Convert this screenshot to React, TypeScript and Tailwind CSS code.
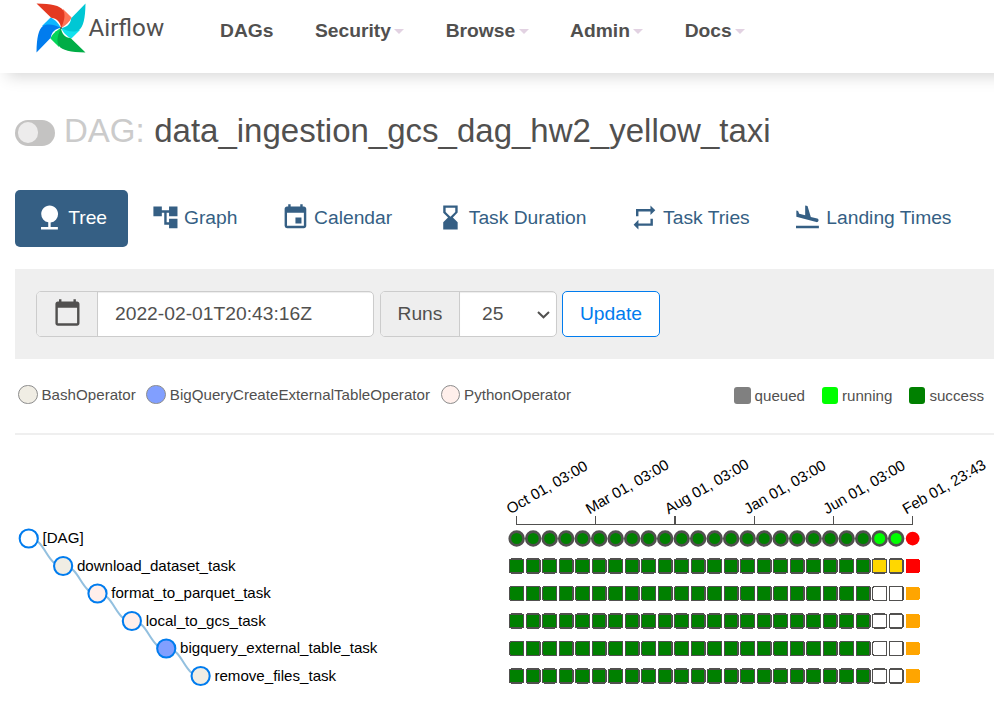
import type { ReactNode } from 'react';
import {
  MdAccountTree,
  MdCalendarToday,
  MdEvent,
  MdFlightLand,
  MdHourglassBottom,
  MdNature,
  MdRepeat,
} from 'react-icons/md';

const BLADES = [
  { angle: 0, dark: '#E43921', light: '#FF7557' },
  { angle: 90, dark: '#00C7D4', light: '#11E1EE' },
  { angle: 180, dark: '#00AD46', light: '#04D659' },
  { angle: 270, dark: '#017CEE', light: '#0CB6FF' },
];

function Pinwheel() {
  return (
    <svg className="h-[50px] w-[50px] shrink-0" viewBox="-25 -25 50 50">
      {BLADES.map((b) => (
        <g key={b.angle} transform={`rotate(${b.angle})`}>
          <path d="M2 -19 L10.6 -10.4 C9 -6.5 5 -2.5 0 0 Z" fill={b.light} />
        </g>
      ))}
      {BLADES.map((b) => (
        <g key={b.angle} transform={`rotate(${b.angle})`}>
          <path
            d="M-24.5 -24.5 C-9 -24.2 -1.5 -22.5 2.2 -17.8 C5.2 -12.5 2.5 -5 0 0 C-0.5 -5.5 -4 -9.6 -9.8 -10.2 Z"
            fill={b.dark}
          />
        </g>
      ))}
      <circle r="0.9" fill="#51504f" />
    </svg>
  );
}

function NavItem({ label, caret = true }: { label: string; caret?: boolean }) {
  return (
    <a className="flex items-center font-bold">
      {label}
      {caret && (
        <span className="mt-[2px] ml-[3.25px] border-x-[5.5px] border-t-[5.5px] border-x-transparent border-t-[#e2d2e2]" />
      )}
    </a>
  );
}

function Tab({ icon, label, active }: { icon: ReactNode; label: string; active?: boolean }) {
  return (
    <li
      className={
        active
          ? 'flex h-[57px] w-[113px] items-center gap-[4.5px] rounded-[5px] bg-[#355f84] pl-[19.8px] whitespace-nowrap text-white'
          : 'flex h-[57px] items-center gap-[4px] rounded-[5px] px-[20.6px] whitespace-nowrap text-[#355f84]'
      }
    >
      <span className="-mt-[2px] text-[28.9px]">{icon}</span>
      <span className="-mt-[2px]">{label}</span>
    </li>
  );
}

function Operator({ label, dot }: { label: string; dot: string }) {
  return (
    <span className="flex items-center gap-[4px]">
      <span className={`h-[19px] w-[19.5px] rounded-full border border-[#8c8c8c] ${dot}`} />
      {label}
    </span>
  );
}

function TaskState({ label, dot }: { label: string; dot: string }) {
  return (
    <span className="flex items-center gap-[4px]">
      <span className={`h-[17px] w-[16.5px] rounded-[3px] ${dot}`} />
      {label}
    </span>
  );
}

const TASKS = [
  { label: '[DAG]', fill: '#ffffff' },
  { label: 'download_dataset_task', fill: '#f0ede4' },
  { label: 'format_to_parquet_task', fill: '#ffefeb' },
  { label: 'local_to_gcs_task', fill: '#ffefeb' },
  { label: 'bigquery_external_table_task', fill: '#819fff' },
  { label: 'remove_files_task', fill: '#f0ede4' },
];

const DATES = [
  'Oct 01, 03:00',
  'Mar 01, 03:00',
  'Aug 01, 03:00',
  'Jan 01, 03:00',
  'Jun 01, 03:00',
  'Feb 01, 23:43',
];

function cellColor(row: number, col: number) {
  if (col < 22) return 'green';
  if (col < 24) return row === 0 ? 'lime' : row === 1 ? 'gold' : 'white';
  return row < 2 ? 'red' : 'orange';
}

/* Chart units are CSS pixels at 100% zoom; the view is magnified by 1.375. */
function TreeChart() {
  return (
    <svg className="block h-[277px] w-[979px]" fontFamily='"Liberation Sans", Arial, sans-serif' fontSize="11">
      <g transform="translate(13.75 103.5) scale(1.375)">
        {TASKS.slice(1).map((t, i) => (
          <path
            key={t.label}
            d={`M${i * 25} ${i * 20}C${i * 25 + 12.5} ${i * 20} ${i * 25 + 12.5} ${i * 20 + 20} ${i * 25 + 25} ${i * 20 + 20}`}
            fill="none"
            stroke="#93c0df"
            strokeWidth="1.5"
          />
        ))}
        {TASKS.map((t, i) => (
          <g key={t.label} transform={`translate(${i * 25} ${i * 20})`}>
            <circle r="6.6" fill={t.fill} stroke="#017cee" strokeWidth="1.5" />
            <text x="10" y="3.5" fill="#000">
              {t.label}
            </text>
          </g>
        ))}
        {TASKS.map((t, row) => (
          <g key={t.label} transform={`translate(350 ${row * 20})`}>
            {Array.from({ length: 25 }, (_, col) => (
              <rect
                key={col}
                x={col * 12 - 0.15}
                y={-5}
                width="10"
                height="10"
                rx={row === 0 ? 5 : 1}
                fill={cellColor(row, col)}
                stroke={col === 24 ? 'none' : '#51504f'}
                strokeWidth={row === 0 ? 2 : 1}
                shapeRendering={row === 0 ? 'auto' : 'crispEdges'}
              />
            ))}
          </g>
        ))}
      </g>
      <path
        d="M501.5 81V89.5H897.5V81M580.7 81V89M659.9 81V89M739.1 81V89M818.3 81V89"
        fill="none"
        stroke="#51504f"
        strokeWidth="1.2"
        shapeRendering="crispEdges"
      />
      {DATES.map((d, i) => (
        <text
          key={d}
          transform={`translate(${495.2 + i * 79.2} 79.4) rotate(-30)`}
          fontSize="15.125"
          fill="#000"
        >
          {d}
        </text>
      ))}
    </svg>
  );
}

export default function App() {
  return (
    <div className="h-[712px] w-[994px] overflow-hidden bg-white font-['Liberation_Sans',Arial,sans-serif] text-[19.25px] leading-[27.5px] text-[#51504f]">
      <header className="flex h-[73px] w-[1200px] bg-white pl-[36px] shadow-[0_10px_15px_-7px_rgba(0,0,0,0.17)]">
        <div className="mt-[2.5px] flex w-[184px] items-start">
          <Pinwheel />
          <span className="mt-[12.5px] ml-[2.5px] font-['Roboto',sans-serif] text-[24.2px]">Airflow</span>
        </div>
        <nav className="mt-[17px] flex h-[27.5px] gap-[41.5px]">
          <NavItem label="DAGs" caret={false} />
          <NavItem label="Security" />
          <NavItem label="Browse" />
          <NavItem label="Admin" />
          <NavItem label="Docs" />
        </nav>
      </header>

      <main className="pl-[15px]">
        <h1 className="flex h-[117px] items-center pb-[2px] text-[33px] leading-[36px]">
          <span className="mt-[4px] flex h-[26px] w-[40px] items-center rounded-full bg-[#c4c3c2] pl-[3px]">
            <span className="h-[21px] w-[20px] rounded-full bg-[#edecec]" />
          </span>
          <span className="ml-[9px] text-[#cbcbcb]">DAG:</span>
          <span className="ml-[9.5px]">data_ingestion_gcs_dag_hw2_yellow_taxi</span>
        </h1>

        <ul className="flex gap-[2.5px]">
          <Tab icon={<MdNature />} label="Tree" active />
          <Tab icon={<MdAccountTree />} label="Graph" />
          <Tab icon={<MdEvent />} label="Calendar" />
          <Tab icon={<MdHourglassBottom />} label="Task Duration" />
          <Tab icon={<MdRepeat />} label="Task Tries" />
          <Tab icon={<MdFlightLand />} label="Landing Times" />
        </ul>

        <form className="mt-[22px] flex h-[90px] items-center bg-[#efefef] pl-[21px]">
          <div className="flex h-[46px] w-[338px] overflow-hidden rounded-[5px] border border-[#ccc] bg-white">
            <span className="flex w-[61px] items-center justify-center border-r border-[#ccc] bg-[#eee] text-[28.9px]">
              <MdCalendarToday className="-mt-[4px]" />
            </span>
            <span className="flex grow items-center pb-px pl-[17px] shadow-[inset_0_1px_1px_rgba(0,0,0,0.075)]">
              2022-02-01T20:43:16Z
            </span>
          </div>
          <div className="ml-[6px] flex h-[46px] w-[177px] overflow-hidden rounded-[5px] border border-[#ccc] bg-white">
            <span className="flex w-[79px] items-center border-r border-[#ccc] bg-[#eee] pb-px pl-[16.5px]">Runs</span>
            <span className="flex grow items-center justify-between pr-[6px] pb-px pl-[22px] shadow-[inset_0_1px_1px_rgba(0,0,0,0.075)]">
              25
              <svg className="mt-[3px] h-[8px] w-[13px]" viewBox="0 0 13 8">
                <path d="M1 1L6.5 6.3L12 1" fill="none" stroke="#51504f" strokeWidth="2" />
              </svg>
            </span>
          </div>
          <button
            type="button"
            className="ml-[5px] h-[46px] w-[98px] rounded-[5px] border border-[#017cee] bg-white pb-px text-[#017cee]"
          >
            Update
          </button>
        </form>

        <div className="flex h-[76px] items-start justify-between border-b-2 border-[#efefef] pt-[22px] pr-[10px] pl-[3px] text-[15.125px]">
          <div className="flex gap-[10.5px] tracking-[0.02px]">
            <Operator label="BashOperator" dot="bg-[#f0ede4]" />
            <Operator label="BigQueryCreateExternalTableOperator" dot="bg-[#819fff]" />
            <Operator label="PythonOperator" dot="bg-[#ffefeb]" />
          </div>
          <div className="mt-px flex gap-[16.5px]">
            <TaskState label="queued" dot="bg-[#808080]" />
            <TaskState label="running" dot="bg-[#00ff00]" />
            <TaskState label="success" dot="bg-[#008000]" />
          </div>
        </div>

        <TreeChart />
      </main>
    </div>
  );
}
